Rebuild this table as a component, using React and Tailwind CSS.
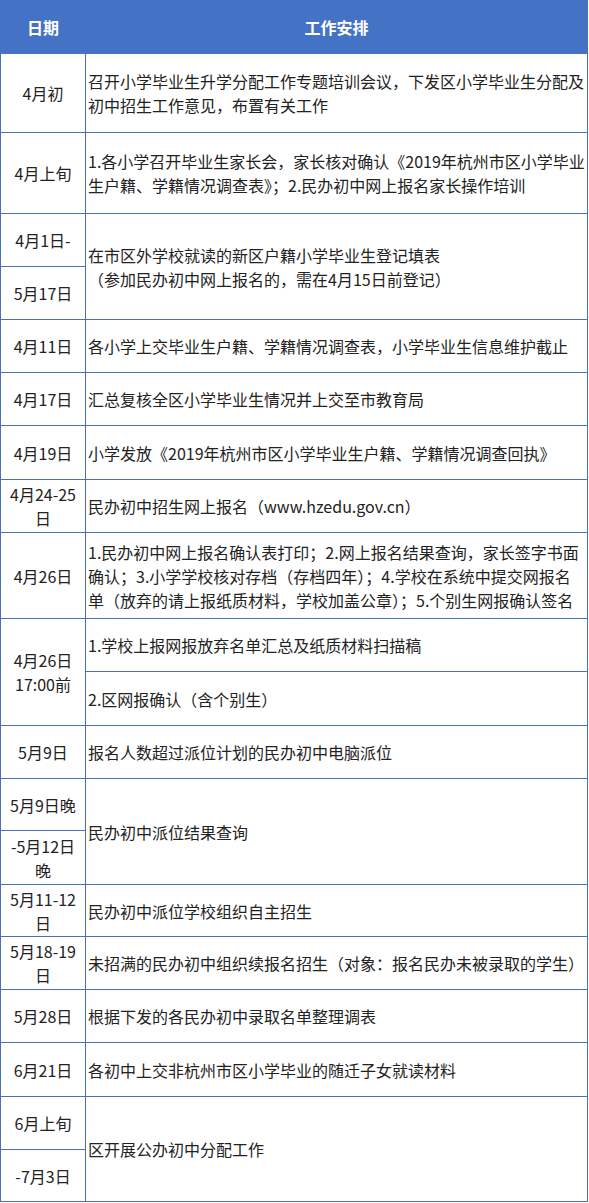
import React from "react";

const font = { fontFamily: '"Noto Sans CJK SC", "Noto Sans", sans-serif' };

// each row: date cells (left) and work cells (right); span = rows covered
const rows = [
  { h: 79, date: ["4月初"], work: ["召开小学毕业生升学分配工作专题培训会议，下发区小学毕业生分配及", "初中招生工作意见，布置有关工作"] },
  { h: 81, date: ["4月上旬"], work: ["1.各小学召开毕业生家长会，家长核对确认《2019年杭州市区小学毕业", "生户籍、学籍情况调查表》；2.民办初中网上报名家长操作培训"] },
  { h: 53, date: ["4月1日-"], work: ["在市区外学校就读的新区户籍小学毕业生登记填表", "（参加民办初中网上报名的，需在4月15日前登记）"], workSpan: 2 },
  { h: 53, date: ["5月17日"] },
  { h: 53, date: ["4月11日"], work: ["各小学上交毕业生户籍、学籍情况调查表，小学毕业生信息维护截止"] },
  { h: 53, date: ["4月17日"], work: ["汇总复核全区小学毕业生情况并上交至市教育局"] },
  { h: 54, date: ["4月19日"], work: ["小学发放《2019年杭州市区小学毕业生户籍、学籍情况调查回执》"] },
  { h: 53, date: ["4月24-25", "日"], work: ["民办初中招生网上报名（www.hzedu.gov.cn）"] },
  { h: 86, date: ["4月26日"], work: ["1.民办初中网上报名确认表打印；2.网上报名结果查询，家长签字书面", "确认；3.小学学校核对存档（存档四年）；4.学校在系统中提交网报名", "单（放弃的请上报纸质材料，学校加盖公章）；5.个别生网报确认签名"] },
  { h: 53, date: ["4月26日", "17:00前"], dateSpan: 2, work: ["1.学校上报网报放弃名单汇总及纸质材料扫描稿"] },
  { h: 54, work: ["2.区网报确认（含个别生）"] },
  { h: 53, date: ["5月9日"], work: ["报名人数超过派位计划的民办初中电脑派位"] },
  { h: 52, date: ["5月9日晚"], work: ["民办初中派位结果查询"], workSpan: 2 },
  { h: 54, date: ["-5月12日", "晚"] },
  { h: 52, date: ["5月11-12", "日"], work: ["民办初中派位学校组织自主招生"] },
  { h: 53, date: ["5月18-19", "日"], work: ["未招满的民办初中组织续报名招生（对象：报名民办未被录取的学生）"] },
  { h: 53, date: ["5月28日"], work: ["根据下发的各民办初中录取名单整理调表"] },
  { h: 54, date: ["6月21日"], work: ["各初中上交非杭州市区小学毕业的随迁子女就读材料"] },
  { h: 53, date: ["6月上旬"], work: ["区开展公办初中分配工作"], workSpan: 2 },
  { h: 52, date: ["-7月3日"] },
];

const Lines = ({ lines }) =>
  lines.map((t, i) => (
    <span key={i} className="block whitespace-nowrap">
      {t}
    </span>
  ));

export default function App() {
  return (
    <div className="bg-white w-[589px]" style={font}>
      <table className="w-[588px] table-fixed border-collapse text-[16px] leading-[24px] text-[#222222]">
        <colgroup>
          <col className="w-[85px]" />
          <col />
        </colgroup>
        <thead>
          <tr className="h-[53px] bg-[#4472c4] text-white font-bold">
            <th className="border border-[#4472c4] text-center align-middle">日期</th>
            <th className="border border-[#4472c4] text-center align-middle">工作安排</th>
          </tr>
        </thead>
        <tbody>
          {rows.map((r, i) => (
            <tr key={i} style={{ height: r.h }}>
              {r.date && (
                <td
                  rowSpan={r.dateSpan || 1}
                  className="border border-[#4a70b8] px-[2px] text-center align-middle"
                >
                  <Lines lines={r.date} />
                </td>
              )}
              {r.work && (
                <td
                  rowSpan={r.workSpan || 1}
                  className="border border-[#4a70b8] pl-[2px] pr-0 text-left align-middle"
                >
                  <Lines lines={r.work} />
                </td>
              )}
            </tr>
          ))}
        </tbody>
      </table>
    </div>
  );
}
